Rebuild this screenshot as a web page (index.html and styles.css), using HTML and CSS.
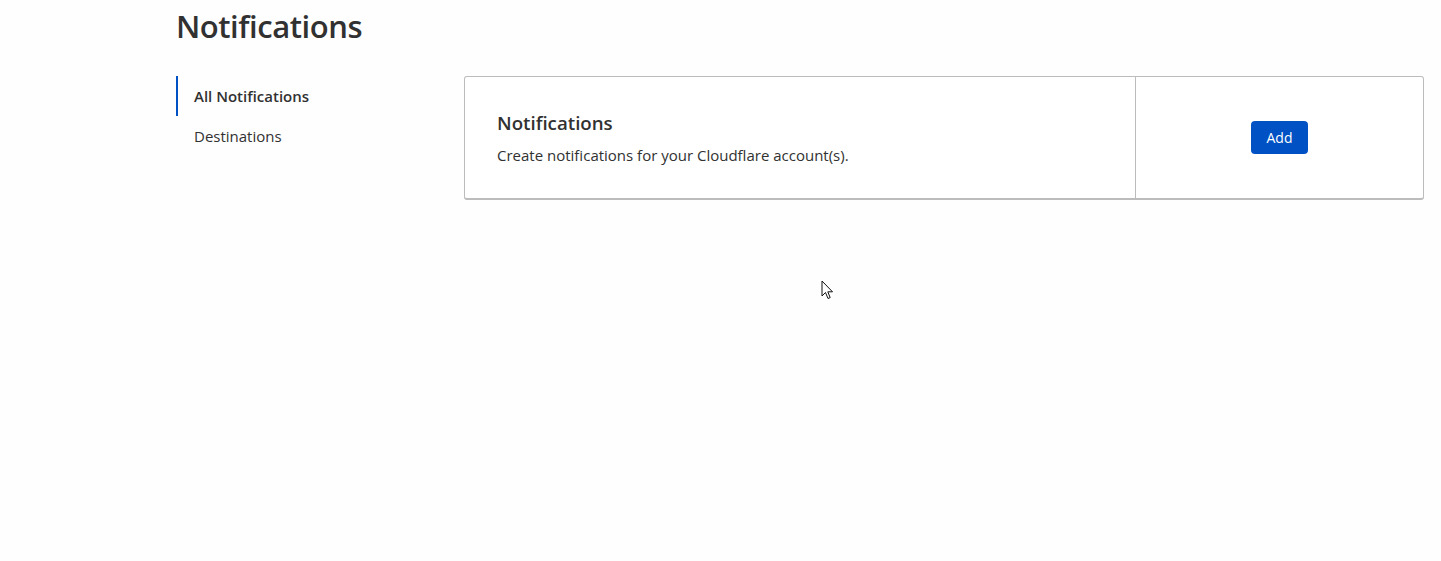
FILE: index.html
```html
<!DOCTYPE html>
<html>

<head>
  <title>Notifications</title>
  <link rel="stylesheet" href="styles.css">
</head>

<body>
  <main class="page">
    <h1 class="page-title">Notifications</h1>
    <div class="layout">
      <nav class="side-nav">
        <a class="side-link active" href="#">All Notifications</a>
        <a class="side-link" href="#">Destinations</a>
      </nav>
      <section class="card">
        <div class="card-body">
          <h2 class="card-title">Notifications</h2>
          <p class="card-text">Create notifications for your Cloudflare account(s).</p>
        </div>
        <div class="card-action">
          <button type="button" class="btn-primary">Add</button>
        </div>
      </section>
    </div>
  </main>

  <svg class="cursor" width="14" height="22" viewBox="0 0 14 22">
    <path d="M1 1 L1 16 L4.5 12.5 L7 18.5 L9.2 17.6 L6.8 11.8 L11.5 11.8 Z" fill="#fff" stroke="#111" stroke-width="1"/>
  </svg>
</body>

</html>
```

FILE: styles.css
```css
*, *::before, *::after {
  box-sizing: border-box;
}
body {
  margin: 0;
  background: #fefefe;
  color: #313131;
  font-family: 'Open Sans', sans-serif;
  font-size: 15px;
  position: relative;
  height: 561px;
}

.page {
  padding: 0 17px 0 176px;
}

.page-title {
  margin: 0;
  padding-top: 4px;
  font-size: 31px;
  font-weight: 600;
  line-height: 44px;
  letter-spacing: -0.45px;
}

.layout {
  display: flex;
  margin-top: 28px;
}

.side-nav {
  width: 288px;
  display: flex;
  flex-direction: column;
}
.side-link {
  display: block;
  height: 40px;
  line-height: 40px;
  padding-left: 16px;
  color: #313131;
  text-decoration: none;
  font-size: 15px;
  border-left: 2px solid transparent;
}
.side-link.active {
  border-left-color: #0051c3;
  font-weight: 600;
}

.card {
  flex: 1;
  display: flex;
  height: 124px;
  border: 1px solid #bcbcbc;
  border-bottom-width: 2px;
  border-radius: 3px;
  background: #fff;
}
.card-body {
  width: 671px;
  padding: 34px 32px 0;
  border-right: 1px solid #bcbcbc;
}
.card-title {
  margin: 0;
  font-size: 18.7px;
  font-weight: 600;
  line-height: 24px;
}
.card-text {
  margin: 9px 0 0;
  font-size: 15px;
  line-height: 22px;
}
.card-action {
  flex: 1;
  display: flex;
  align-items: center;
  justify-content: center;
}

.btn-primary {
  font: inherit;
  font-size: 14px;
  color: white;
  background: #0051c3;
  border: none;
  border-radius: 4px;
  width: 57px;
  height: 33px;
  cursor: pointer;
}

.cursor {
  position: absolute;
  left: 821px;
  top: 280px;
}
```
